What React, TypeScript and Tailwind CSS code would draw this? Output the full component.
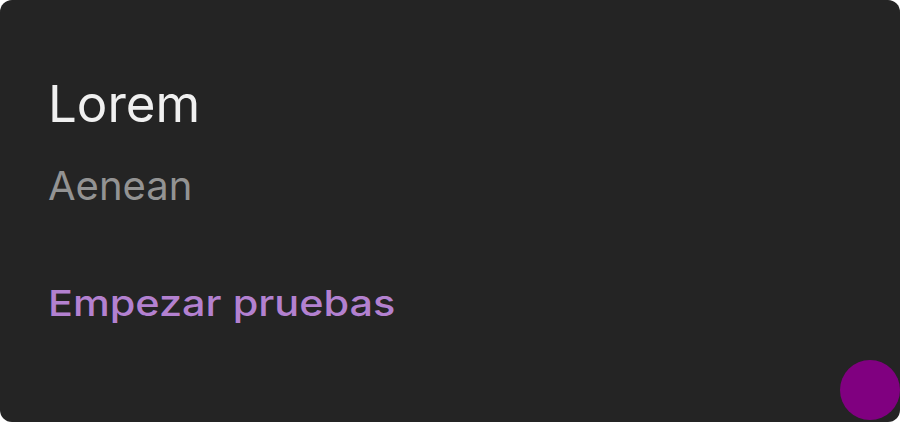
export default function App() {
  return (
    <div className="w-[900px] h-[422px] bg-white">
      <div className="relative w-full h-full rounded-[12px] bg-[#242424] overflow-hidden px-[48px] pt-[73px] flex flex-col items-start" style={{ fontFamily: "Inter, sans-serif" }}>
        <div className="text-[51px] leading-[62px] text-[#f0f0f0]">Lorem</div>
        <div className="mt-[27px] text-[40px] leading-[48px] text-[#939393]">Aenean</div>
        <div className="mt-[71px] text-[36px] leading-[44px] text-[#b381d0] font-medium origin-left scale-x-[1.15]">Empezar pruebas</div>
        <div className="absolute left-[840px] top-[360px] w-[60px] h-[60px] rounded-full bg-[#800080]"></div>
      </div>
    </div>
  );
}
